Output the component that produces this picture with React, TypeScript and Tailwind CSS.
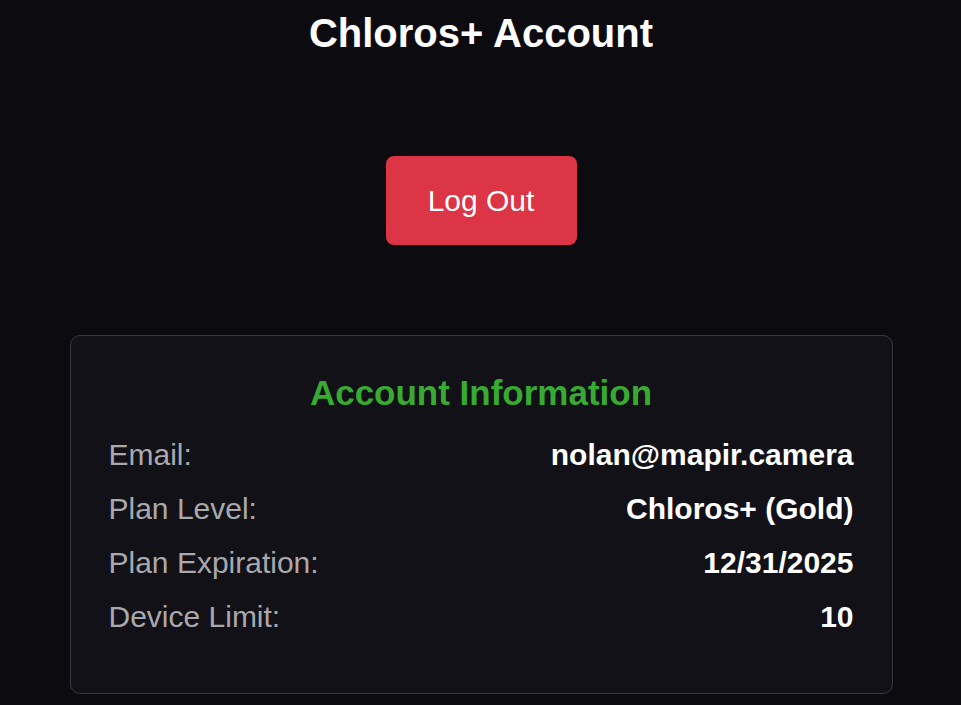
const rows = [
  { label: "Email:", value: "nolan@mapir.camera" },
  { label: "Plan Level:", value: "Chloros+ (Gold)" },
  { label: "Plan Expiration:", value: "12/31/2025" },
  { label: "Device Limit:", value: "10" },
];

export default function App() {
  return (
    <div className="min-h-[705px] w-full bg-[#0c0c10] pl-[1px] font-['Liberation_Sans',Arial,sans-serif] flex flex-col items-center">
      {/* Header */}
      <h1 className="mt-[10px] text-[40px] leading-[46px] font-bold text-white">Chloros+ Account</h1>

      <button className="mt-[100px] h-[89px] w-[191px] rounded-[8px] bg-[#dc3545] text-[30px] text-white">
        Log Out
      </button>

      {/* Account card */}
      <div className="mt-[90px] w-[823px] rounded-[10px] border-[1.5px] border-[#38383e] bg-[#121117] px-[38px] pt-[37px] pb-[49px]">
        <h2 className="text-center text-[35px] leading-[40px] font-bold text-[#38aa32]">Account Information</h2>
        <div className="mt-[15px] flex flex-col">
          {rows.map(({ label, value }) => (
            <div key={label} className="flex items-center justify-between py-[10px] text-[30px] leading-[34px]">
              <span className="text-[#a9a9ad]">{label}</span>
              <span className="font-bold text-white">{value}</span>
            </div>
          ))}
        </div>
      </div>
    </div>
  );
}
